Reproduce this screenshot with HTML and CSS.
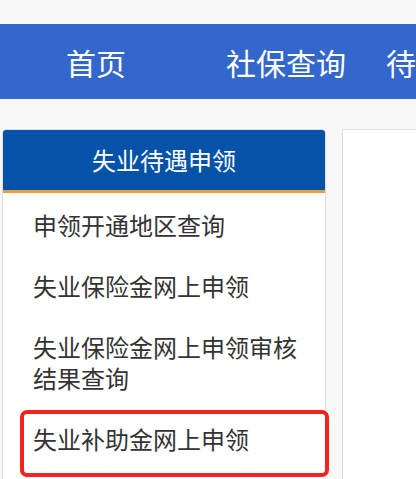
FILE: index.html
```html
<!DOCTYPE html>
<html lang="zh-CN">
<head>
	<meta charset="UTF-8">
	<title>失业待遇申领</title>
	<link rel="stylesheet" href="styles.css">
</head>
<body>
	<div class="topnav">
		<a class="nav-item nav-home" href="#">首页</a>
		<a class="nav-item" href="#">社保查询</a>
		<a class="nav-item" href="#">待遇申领</a>
	</div>
	<div class="main">
		<div class="sidebar">
			<div class="sidebar-title">失业待遇申领</div>
			<ul class="menu">
				<li><a href="#">申领开通地区查询</a></li>
				<li><a href="#">失业保险金网上申领</a></li>
				<li><a href="#">失业保险金网上申领审核结果查询</a></li>
				<li><a href="#">失业补助金网上申领</a></li>
			</ul>
		</div>
		<div class="content"></div>
	</div>
	<div class="mark"></div>
</body>
</html>
```

FILE: styles.css
```css
body{
  margin: 0;
  background-color: #f8f8f9;
  font-family: "Noto Sans CJK SC", "Noto Sans", sans-serif;
  overflow: hidden;
}
/* top navigation */
.topnav{
  margin-top: 24px;
  height: 75px;
  background-color: #3467cc;
  display: flex;
  align-items: center;
  padding-left: 46px;
  white-space: nowrap;
}
.nav-item{
  color: #fff;
  text-decoration: none;
  font-size: 30px;
  padding: 0 20px;
}
.nav-home{
  margin-right: 60px;
}
/* page body */
.main{
  display: flex;
  align-items: flex-start;
  gap: 16px;
  padding: 30px 0 0 2px;
}
.sidebar{
  width: 322px;
  height: 400px;
  background-color: #fff;
  border: 1px solid #dedede;
  border-radius: 4px 4px 0 0;
  flex: none;
}
.sidebar-title{
  height: 60px;
  line-height: 60px;
  background-color: #0553a9;
  border-bottom: 3px solid #e3a03e;
  border-radius: 3px 3px 0 0;
  color: #fff;
  font-size: 24px;
  text-align: center;
}
.menu{
  list-style: none;
  margin: 0;
  padding: 1px 0 0 0;
}
.menu li{
  padding: 15px 20px 15px 30px;
  font-size: 24px;
  line-height: 31px;
}
.menu a{
  color: #333;
  text-decoration: none;
}
.content{
  flex: 1;
  height: 400px;
  background-color: #fff;
  border: 1px solid #dedede;
  border-right: none;
}
/* red highlight box */
.mark{
  position: absolute;
  left: 20px;
  top: 410px;
  width: 301px;
  height: 59px;
  border: 4px solid #f2231b;
  border-radius: 7px;
}
```
